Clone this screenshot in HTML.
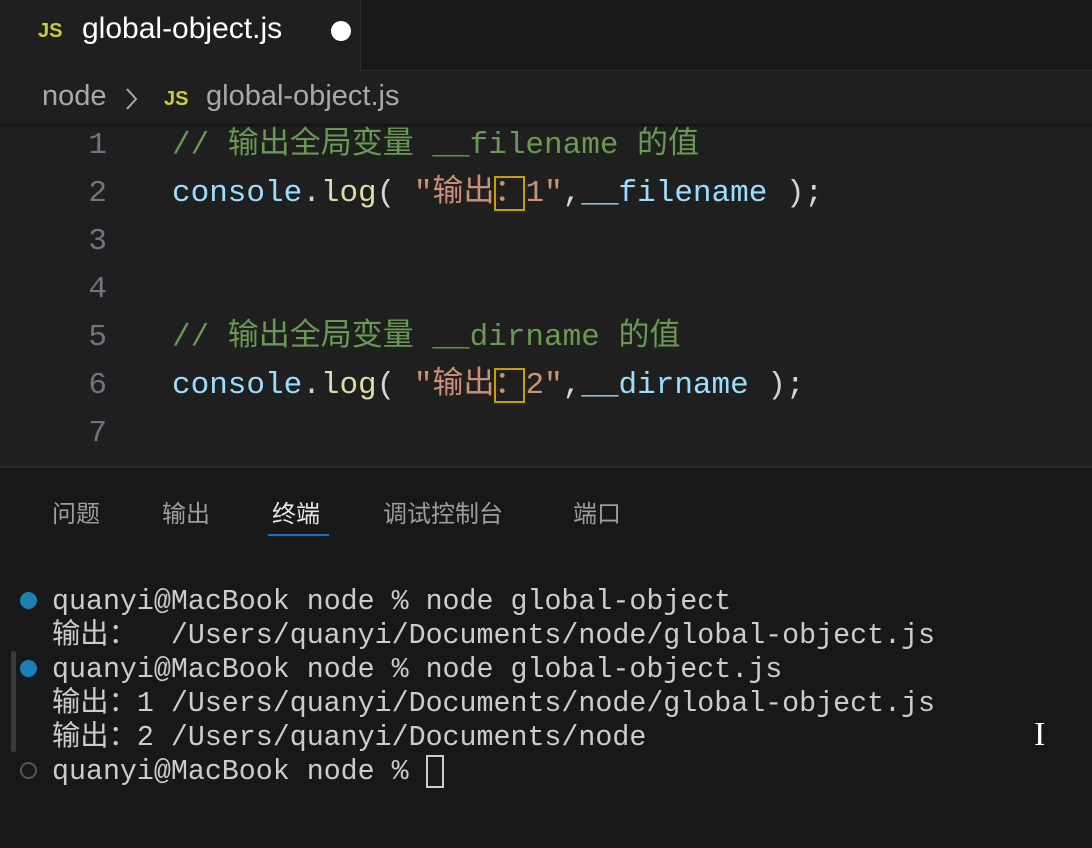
<html><head><style>
body{margin:0;width:1092px;height:846px;background:#1f1f1f;overflow:hidden;position:relative;font-family:"Liberation Sans","Noto Sans CJK SC",sans-serif}
.abs{position:absolute;white-space:pre}
.mono{font-family:"Liberation Mono","Noto Sans CJK SC",monospace}
.code{font-size:31px;line-height:48px;color:#d4d4d4}
.ln{color:#6e7681;position:absolute;left:0;width:107px;text-align:right}
.cl{position:absolute;left:172px}
.cm{color:#6a9955}.fn{color:#dcdcaa}.vr{color:#9cdcfe}.st{color:#ce9178}
.hl{outline:2px solid #c8a000;outline-offset:-2px}
.term{font-size:28.3px;line-height:34px;color:#cccccc}
.js{color:#cbcb41;font-weight:bold;font-size:20px}
</style></head><body>
<div class="abs mono code" style="left:0;top:122px;width:1092px;height:344px;overflow:hidden">
<div style="position:absolute;top:0"><span class="ln">1</span><span class="cl"><span class="cm">// 输出全局变量 __filename 的值</span></span></div>
<div style="position:absolute;top:48px"><span class="ln">2</span><span class="cl"><span class="vr">console</span>.<span class="fn">log</span>( <span class="st">"输出<span class="hl">：</span>1"</span>,<span class="vr">__filename</span> );</span></div>
<div style="position:absolute;top:96px"><span class="ln">3</span></div>
<div style="position:absolute;top:144px"><span class="ln">4</span></div>
<div style="position:absolute;top:192px"><span class="ln">5</span><span class="cl"><span class="cm">// 输出全局变量 __dirname 的值</span></span></div>
<div style="position:absolute;top:240px"><span class="ln">6</span><span class="cl"><span class="vr">console</span>.<span class="fn">log</span>( <span class="st">"输出<span class="hl">：</span>2"</span>,<span class="vr">__dirname</span> );</span></div>
<div style="position:absolute;top:288px"><span class="ln">7</span></div>
<div style="position:absolute;top:336px"><span class="ln">8</span></div>
</div>
<div class="abs" style="left:0;top:0;width:1092px;height:70px;background:#181818"></div>
<div class="abs" style="left:0;top:0;width:360px;height:71px;background:#1f1f1f;border-right:1px solid #2b2b2b"></div>
<div class="abs" style="left:360px;top:70px;width:732px;height:1px;background:#2b2b2b"></div>
<div class="abs" style="left:0;top:71px;width:1092px;height:53px;background:#1f1f1f"></div>
<div class="abs" style="left:38px;top:20px;"><span class="js">JS</span></div>
<div class="abs" style="left:82px;top:12px;font-size:30px;color:#fff">global-object.js</div>
<div class="abs" style="left:331px;top:21px;width:20px;height:20px;border-radius:50%;background:#fff"></div>
<div class="abs" style="left:42px;top:80px;font-size:29px;color:#a9a9a9">node</div>
<svg class="abs" style="left:124px;top:86px" width="16" height="26"><path d="M3 3 L12 13 L3 23" stroke="#a9a9a9" stroke-width="2" fill="none"/></svg>
<div class="abs" style="left:164px;top:88px;"><span class="js">JS</span></div>
<div class="abs" style="left:206px;top:80px;font-size:29px;color:#a9a9a9">global-object.js</div>
<div class="abs" style="left:0;top:124px;width:1092px;height:4px;background:linear-gradient(#111,rgba(31,31,31,0))"></div>
<div class="abs" style="left:0;top:466px;width:1092px;height:380px;background:#181818;border-top:2px solid #2b2b2b"></div>
<div class="abs" style="left:52px;top:494px;font-size:24px;color:#9d9d9d">问题</div>
<div class="abs" style="left:162px;top:494px;font-size:24px;color:#9d9d9d">输出</div>
<div class="abs" style="left:272px;top:494px;font-size:24px;color:#e7e7e7">终端</div>
<div class="abs" style="left:268px;top:534px;width:61px;height:2px;background:#0078d4"></div>
<div class="abs" style="left:383px;top:494px;font-size:24px;color:#9d9d9d">调试控制台</div>
<div class="abs" style="left:573px;top:494px;font-size:24px;color:#9d9d9d">端口</div>
<div class="abs" style="left:20px;top:592px;width:17px;height:17px;border-radius:50%;background:#1b80b2"></div>
<div class="abs" style="left:20px;top:660px;width:17px;height:17px;border-radius:50%;background:#1b80b2"></div>
<div class="abs" style="left:20px;top:762px;width:13px;height:13px;border-radius:50%;border:2px solid #555"></div>
<div class="abs" style="left:11px;top:651px;width:5px;height:101px;background:#3a3a3a;border-radius:2px"></div>
<div class="abs mono term" style="left:52px;top:585px">quanyi@MacBook node % node global-object
输出：  /Users/quanyi/Documents/node/global-object.js
quanyi@MacBook node % node global-object.js
输出：1 /Users/quanyi/Documents/node/global-object.js
输出：2 /Users/quanyi/Documents/node
quanyi@MacBook node % </div>
<div class="abs" style="left:426px;top:755px;width:14px;height:29px;border:2px solid #ccc"></div>
<div class="abs" style="left:1034px;top:716px;font-size:34px;color:#fff;font-family:'Liberation Serif',serif">I</div>
</body></html>
